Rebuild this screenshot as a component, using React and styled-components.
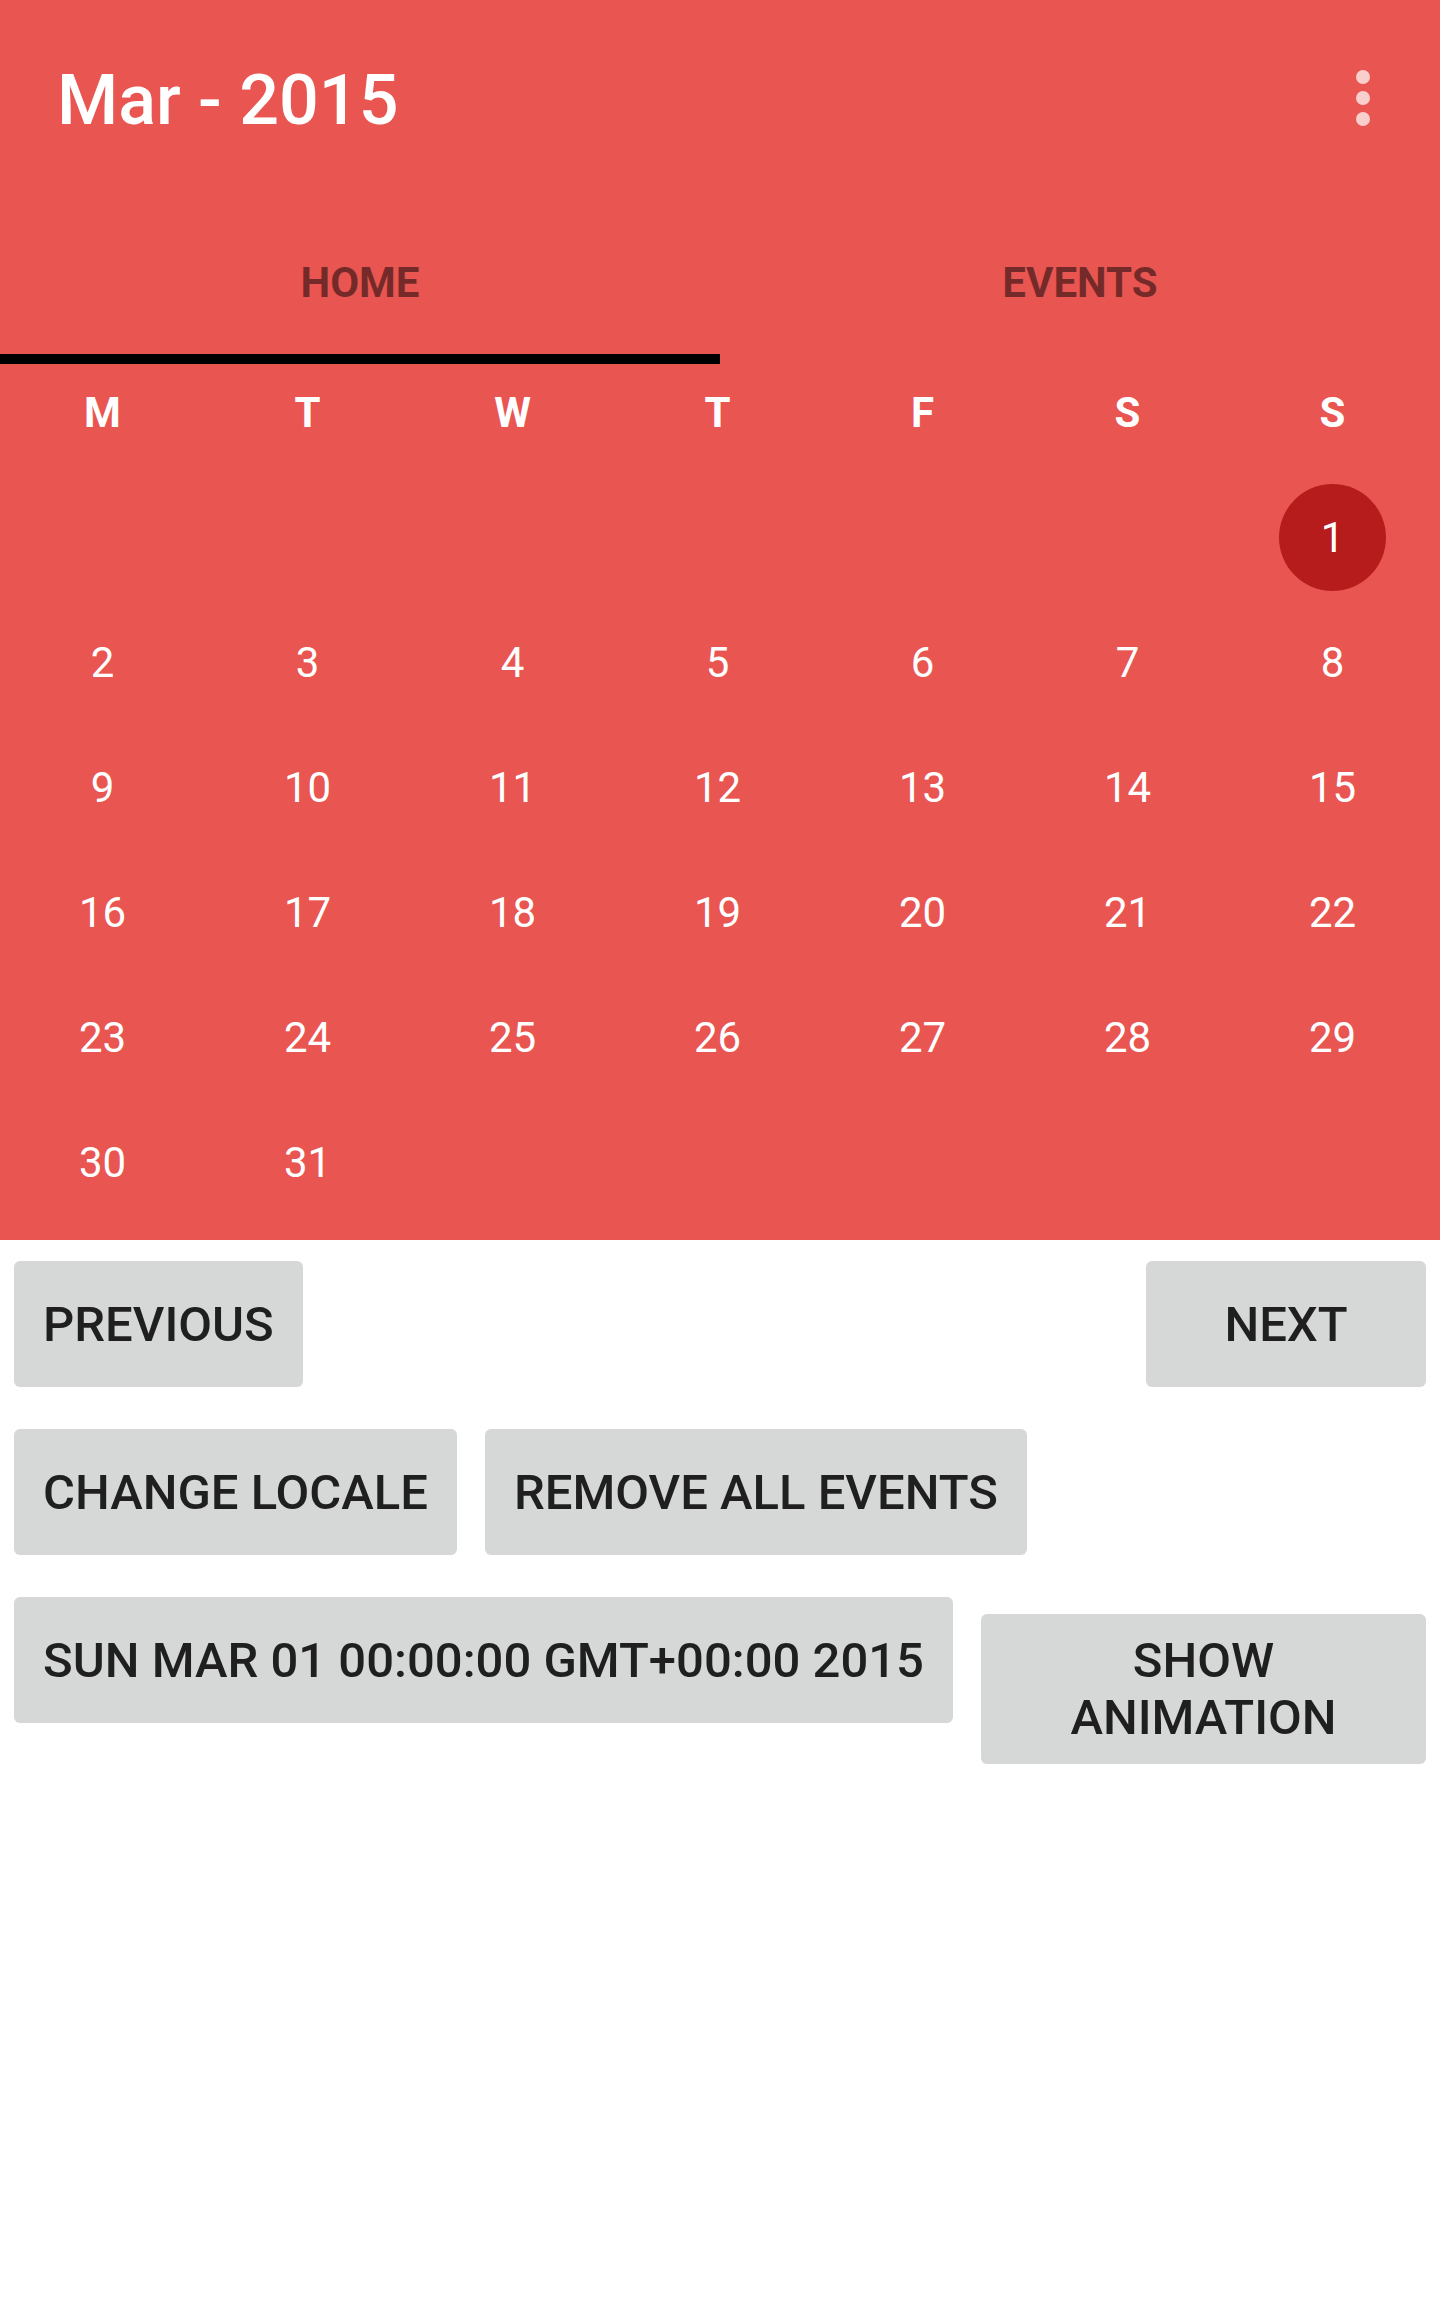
import React from "react";
import styled, { createGlobalStyle } from "styled-components";

const Global = createGlobalStyle`
  html, body { margin: 0; padding: 0; background: #ffffff; }
  body { font-family: Roboto, "Noto Sans", "Liberation Sans", sans-serif; }
  #root { min-height: 2308px; }
  * { box-sizing: border-box; }
`;

const RED = "#e95551";

const Page = styled.div`
  width: 1440px;
  min-height: 2308px;
  background: #ffffff;
`;

const Header = styled.header`
  background: ${RED};
`;

const Toolbar = styled.div`
  height: 196px;
  display: flex;
  align-items: center;
  justify-content: space-between;
  padding: 3px 35px 0 57px;
`;

const Title = styled.h1`
  margin: 0;
  font-family: Roboto, sans-serif;
  font-weight: 500;
  font-size: 70px;
  line-height: 1;
  color: #ffffff;
`;

const MenuButton = styled.button`
  width: 84px;
  height: 84px;
  border: 0;
  padding: 0;
  background: transparent;
  display: flex;
  align-items: center;
  justify-content: center;
  margin-top: -3px;
`;

const Tabs = styled.nav`
  display: flex;
  height: 168px;
`;

const Tab = styled.div`
  flex: 1;
  display: flex;
  align-items: center;
  justify-content: center;
  padding-top: 14px;
  border-bottom: 10px solid ${(p) => (p.$active ? "#000000" : "transparent")};
  font-family: Roboto, sans-serif;
  font-weight: 700;
  font-size: 42px;
  color: rgba(0, 0, 0, 0.5);
  text-transform: uppercase;
`;

const Calendar = styled.section`
  padding-bottom: 15px;
`;

const WeekRow = styled.div`
  display: grid;
  grid-template-columns: repeat(7, 205px);
  height: 96px;
  margin-bottom: 15px;
`;

const WeekDay = styled.div`
  display: flex;
  align-items: center;
  justify-content: center;
  font-family: Roboto, sans-serif;
  font-weight: 700;
  font-size: 42px;
  color: #ffffff;
`;

const DaysGrid = styled.div`
  display: grid;
  grid-template-columns: repeat(7, 205px);
  grid-auto-rows: 125px;
`;

const DayCell = styled.div`
  display: flex;
  align-items: center;
  justify-content: center;
`;

const DayNum = styled.span`
  width: 107px;
  height: 107px;
  border-radius: 50%;
  display: flex;
  align-items: center;
  justify-content: center;
  background: ${(p) => (p.$selected ? "#b71c1c" : "transparent")};
  font-family: Roboto, sans-serif;
  font-weight: 400;
  font-size: 42px;
  color: #ffffff;
`;

const Controls = styled.div`
  display: flex;
  flex-direction: column;
`;

const Row = styled.div`
  display: flex;
  align-items: ${(p) => (p.$baseline ? "baseline" : "flex-start")};
  justify-content: ${(p) => (p.$spread ? "space-between" : "flex-start")};
`;

const Button = styled.button`
  flex: ${(p) => (p.$fill ? "1 1 0" : "0 0 auto")};
  min-width: 280px;
  min-height: 126px;
  margin: 21px 14px;
  padding: 18px 29px;
  border: 0;
  border-radius: 6px;
  background: #d6d7d7;
  display: flex;
  align-items: center;
  justify-content: center;
  text-align: center;
  font-family: Roboto, sans-serif;
  font-weight: 500;
  font-size: 49px;
  line-height: 57px;
  color: #1f1f1f;
  text-transform: uppercase;
  white-space: ${(p) => (p.$fill ? "normal" : "nowrap")};
`;

const Dots = () => (
  <svg width="84" height="84" viewBox="0 0 84 84" aria-hidden="true">
    <g fill="rgba(255,255,255,0.72)">
      <circle cx="42" cy="21" r="7" />
      <circle cx="42" cy="42" r="7" />
      <circle cx="42" cy="63" r="7" />
    </g>
  </svg>
);

const weekDays = ["M", "T", "W", "T", "F", "S", "S"];

export default function App() {
  const cells = [];
  for (let i = 0; i < 6; i++) cells.push(null);
  for (let d = 1; d <= 31; d++) cells.push(d);

  return (
    <Page>
      <Global />
      <Header>
        <Toolbar>
          <Title>Mar - 2015</Title>
          <MenuButton aria-label="More options">
            <Dots />
          </MenuButton>
        </Toolbar>
        <Tabs>
          <Tab $active>Home</Tab>
          <Tab>Events</Tab>
        </Tabs>
        <Calendar>
          <WeekRow>
            {weekDays.map((w, i) => (
              <WeekDay key={i}>{w}</WeekDay>
            ))}
          </WeekRow>
          <DaysGrid>
            {cells.map((d, i) => (
              <DayCell key={i}>
                {d && <DayNum $selected={d === 1}>{d}</DayNum>}
              </DayCell>
            ))}
          </DaysGrid>
        </Calendar>
      </Header>
      <Controls>
        <Row $spread>
          <Button>Previous</Button>
          <Button>Next</Button>
        </Row>
        <Row>
          <Button>Change locale</Button>
          <Button>Remove all events</Button>
        </Row>
        <Row $baseline>
          <Button>Sun Mar 01 00:00:00 GMT+00:00 2015</Button>
          <Button $fill>Show animation</Button>
        </Row>
      </Controls>
    </Page>
  );
}
